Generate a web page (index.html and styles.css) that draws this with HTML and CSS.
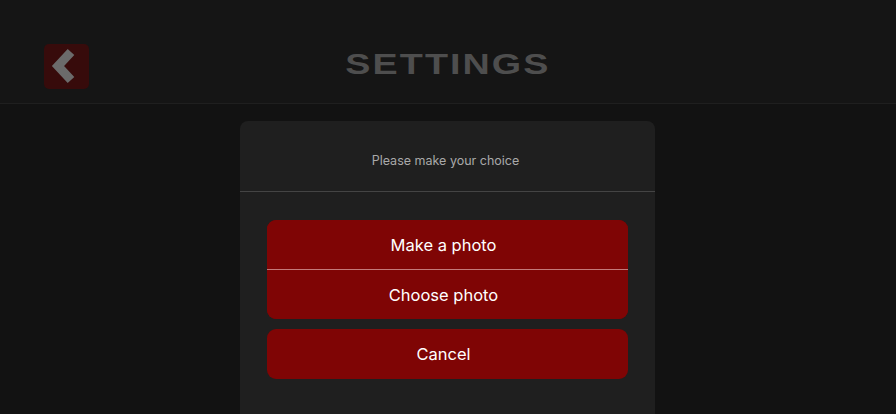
FILE: index.html
```html
<!DOCTYPE html>
<html>
<head>
<meta charset="utf-8">
<link rel="stylesheet" href="styles.css">
</head>
<body>
<header class="topbar">
  <div class="left">
    <button class="back" aria-label="Back">
      <svg width="45" height="45" viewBox="0 0 45 45"><polyline points="27,8 14,22 27,36" fill="none" stroke="#6b6b6b" stroke-width="9" stroke-linejoin="miter"/></svg>
    </button>
  </div>
  <h1 class="title"><span>SETTINGS</span></h1>
  <div class="right"></div>
</header>
<main class="stage">
  <section class="dialog">
    <div class="dialog-head">Please make your choice</div>
    <div class="dialog-body">
      <div class="group">
        <button class="opt">Make a photo</button>
        <button class="opt">Choose photo</button>
      </div>
      <div class="group">
        <button class="opt">Cancel</button>
      </div>
    </div>
  </section>
</main>
</body>
</html>
```
FILE: styles.css
```css
html, body { margin: 0; padding: 0; }
body {
  background: #121212;
  font-family: Inter, "Liberation Sans", sans-serif;
  width: 896px;
  height: 414px;
  overflow: hidden;
}
.topbar {
  box-sizing: border-box;
  height: 104px;
  padding: 44px 0 14px;
  background: #151515;
  border-bottom: 1px solid #1f1f1f;
  display: grid;
  grid-template-columns: 1fr auto 1fr;
  align-items: start;
}
.left { padding-left: 44px; display: flex; }
.back {
  width: 45px; height: 45px;
  padding: 0; border: 0;
  border-radius: 5px;
  background: #370b0b;
  display: flex;
}
.title {
  margin: 0;
  font-family: "Liberation Sans", Arial, sans-serif;
  font-weight: 700;
  font-size: 29px;
  color: #4e4e4e;
  letter-spacing: 1.6px;
  line-height: 40px;
}
.title span { display: inline-block; transform: scaleX(1.3); }
.stage { display: flex; justify-content: center; padding: 17px 1px 0 0; }
.dialog {
  width: 415px;
  height: 300px;
  background: #1f1f1f;
  border-radius: 8px 8px 0 0;
}
.dialog-head {
  padding: 32px 4px 22px 0;
  line-height: 16px;
  font-size: 12.5px;
  color: #a9a9a9;
  text-align: center;
  border-bottom: 1px solid #444;
}
.dialog-body {
  padding: 28px 27px 0;
  display: flex;
  flex-direction: column;
  gap: 10px;
}
.group {
  border-radius: 9px;
  overflow: hidden;
  background: #7f0505;
  display: flex;
  flex-direction: column;
}
.opt {
  height: 50px;
  border: 0;
  background: #7f0505;
  color: #fff;
  font-family: Inter, "Liberation Sans", sans-serif;
  font-size: 16.5px;
  padding: 0 8px 0 0;
}
.opt + .opt { border-top: 1px solid #c47a7a; height: 50px; }
.group .opt:first-child:not(:last-child) { height: 49px; }
```
